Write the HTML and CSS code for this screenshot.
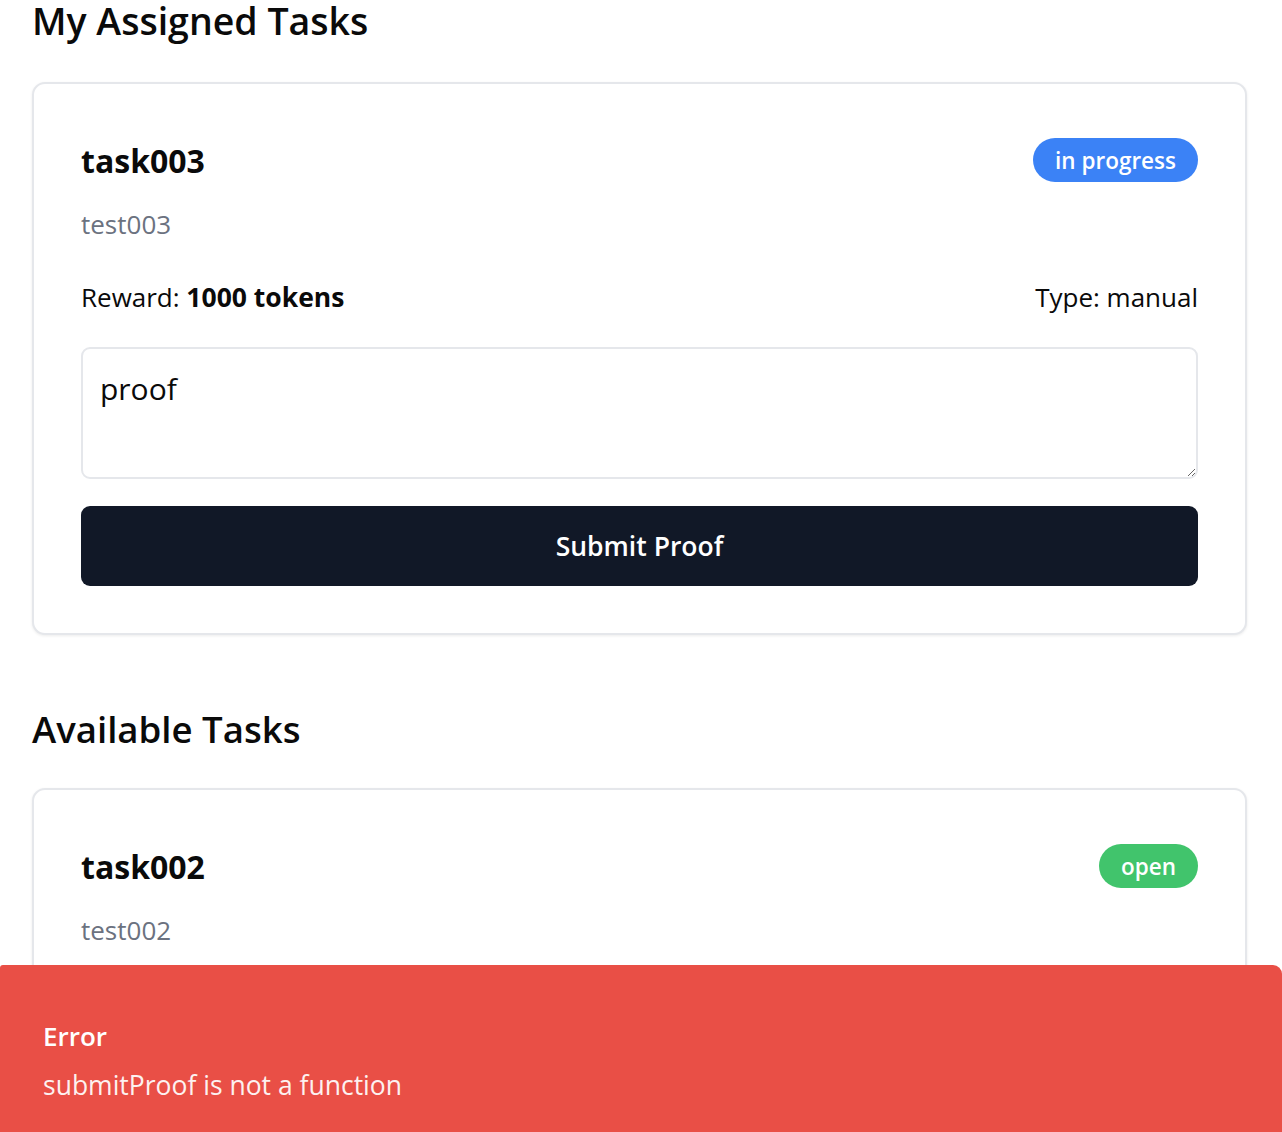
FILE: index.html
```html
<!DOCTYPE html>
<html lang="en">
<head>
<meta charset="utf-8">
<title>Tasks</title>
<link rel="stylesheet" href="styles.css">
</head>
<body>
<main class="page">
  <section class="section">
    <h2 class="section-title">My Assigned Tasks</h2>
    <div class="card">
      <div class="card-head">
        <h3 class="card-title">task003</h3>
        <span class="badge badge-blue">in progress</span>
      </div>
      <p class="card-desc">test003</p>
      <div class="meta">
        <span>Reward: <strong>1000 tokens</strong></span>
        <span>Type: manual</span>
      </div>
      <textarea class="proof">proof</textarea>
      <button class="btn">Submit Proof</button>
    </div>
  </section>
  <section class="section section-2">
    <h2 class="section-title">Available Tasks</h2>
    <div class="card">
      <div class="card-head">
        <h3 class="card-title">task002</h3>
        <span class="badge badge-green">open</span>
      </div>
      <p class="card-desc">test002</p>
      <div class="meta">
        <span>Reward: <strong>500 tokens</strong></span>
        <span>Type: manual</span>
      </div>
      <button class="btn">Accept Task</button>
    </div>
  </section>
</main>
<div class="toast">
  <div class="toast-title">Error</div>
  <div class="toast-desc">submitProof is not a function</div>
</div>
</body>
</html>
```
FILE: styles.css
```css
* { box-sizing: border-box; }
html, body { margin: 0; padding: 0; background: #fff; }
body {
  font-family: "Open Sans", "Noto Sans", "Liberation Sans", sans-serif;
  color: #0a0a0a;
  overflow: hidden;
}
.page {
  margin-top: -6px;
  padding: 0 35px 0 32px;
}
.section-title {
  margin: 0;
  font-size: 37.5px;
  line-height: 54px;
  font-weight: 600;
  color: #0a0a0a;
}
.section-2 .section-title { font-size: 36.6px; }
.section .card { margin-top: 34px; }
.section-2 { margin-top: 67px; }
.section-2 .card { margin-top: 32px; }
.card {
  border: 2px solid #e5e7eb;
  border-radius: 13px;
  padding: 48px 47px 47px 47px;
  box-shadow: 0 1px 3px rgba(0,0,0,0.08);
  background: #fff;
}
.card-head {
  display: flex;
  justify-content: space-between;
  align-items: center;
  min-height: 56px;
}
.card-title {
  margin: 0;
  font-size: 32px;
  line-height: 45px;
  font-weight: 700;
}
.badge {
  display: inline-flex;
  align-items: center;
  height: 44px;
  padding: 0 22px;
  border-radius: 22px;
  color: #fff;
  font-size: 22.5px;
  font-weight: 600;
}
.badge-blue { background: #3b82f6; }
.badge-green { background: #41c46c; }
.card-desc {
  margin: 16px 0 0;
  font-size: 26px;
  line-height: 40px;
  color: #6b7280;
}
.meta {
  margin-top: 33px;
  display: flex;
  justify-content: space-between;
  font-size: 26px;
  line-height: 40px;
}
.meta strong { font-weight: 700; font-size: 26.5px; }
.proof {
  display: block;
  width: 100%;
  height: 132px;
  margin-top: 30px;
  border: 2px solid #e5e7eb;
  border-radius: 9px;
  padding: 17px 17px 12px;
  font-family: inherit;
  font-size: 30px;
  line-height: 45px;
  color: #0a0a0a;
  outline: none;
}
.btn {
  display: block;
  width: 100%;
  height: 80px;
  margin-top: 27px;
  border: 0;
  border-radius: 9px;
  background: #111827;
  color: #fff;
  font-family: inherit;
  font-size: 26.5px;
  font-weight: 600;
}
.toast {
  position: fixed;
  left: 0;
  right: 0;
  top: 965px;
  bottom: 0;
  background: #e94f46;
  border-radius: 3px 9px 0 0;
  padding: 51px 43px 27px;
  color: #fff;
}
.toast-title {
  font-size: 26px;
  line-height: 40px;
  font-weight: 600;
}
.toast-desc {
  margin-top: 9px;
  font-size: 26.5px;
  line-height: 40px;
  opacity: 0.92;
}
```
